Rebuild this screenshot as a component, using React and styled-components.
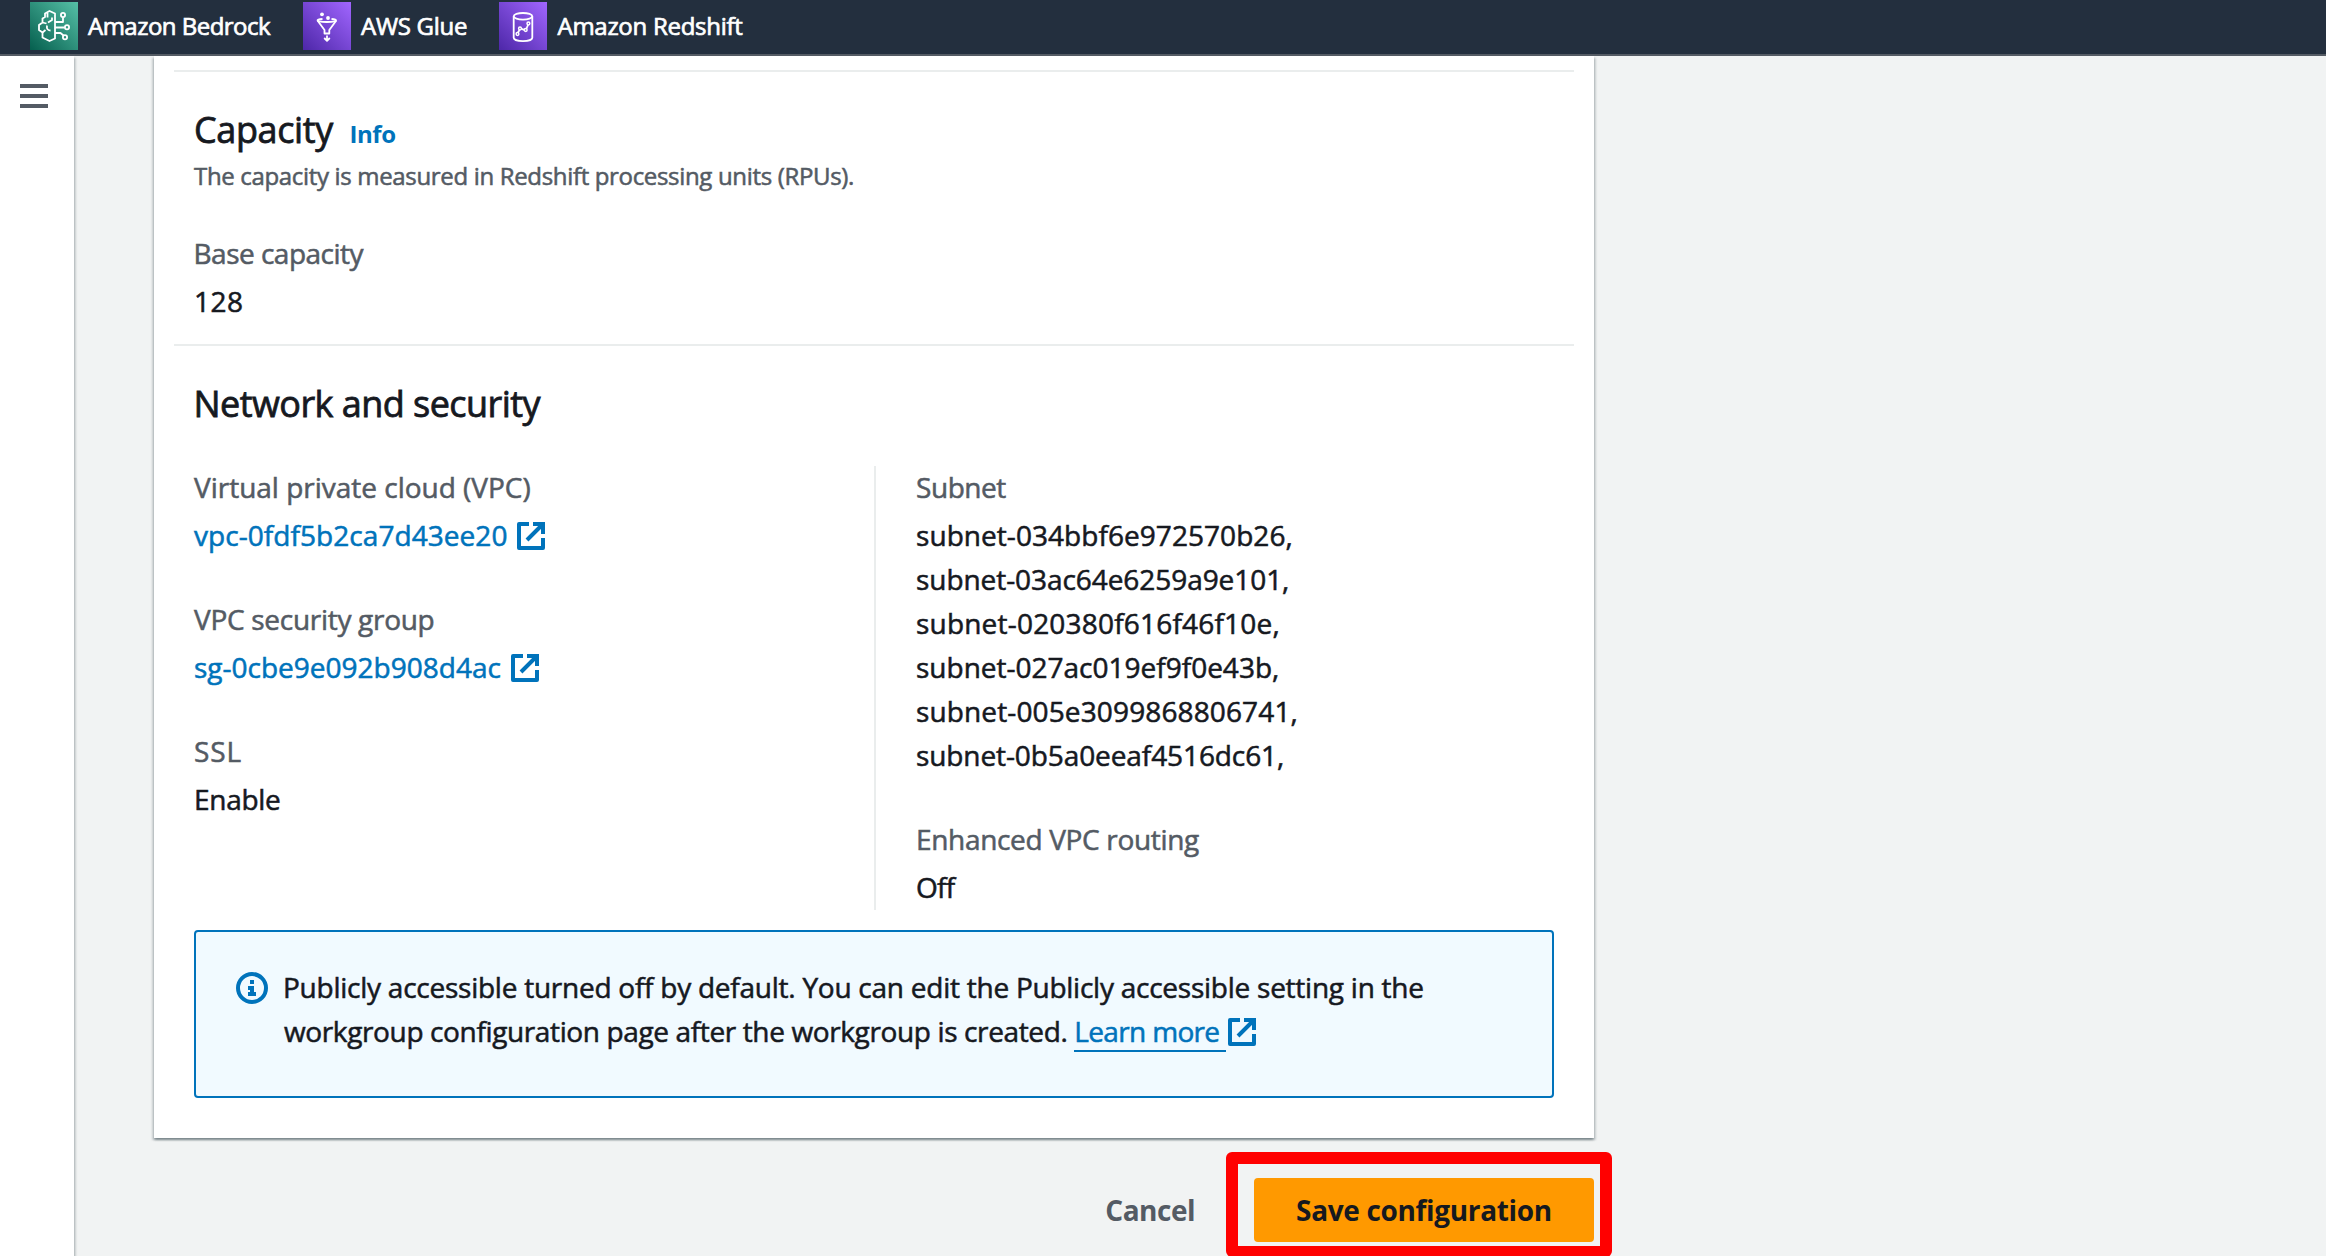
import React from "react";
import styled, { createGlobalStyle, css } from "styled-components";

const color = {
  ink: "#16191f",
  muted: "#545b64",
  link: "#0073bb",
  line: "#eaeded",
  page: "#f1f3f3",
};

const GlobalStyle = createGlobalStyle`
  *, *::before, *::after { box-sizing: border-box; }
  body {
    margin: 0;
    overflow: hidden;
    background: ${color.page};
    color: ${color.ink};
    font: 400 28px/44px "Open Sans", "Noto Sans", sans-serif;
    -webkit-text-stroke: 0.55px currentColor;
  }
  h2, p, dl, dt, dd { margin: 0; font-weight: 400; }
`;

/* Tracking and optical side-bearing correction for a run of text. */
const fitted = css`
  letter-spacing: ${(p) => p.$ls ?? 0}px;
  margin-left: ${(p) => p.$dx ?? 0}px;
`;

const Page = styled.div`
  display: flex;
  flex-direction: column;
  height: 1256px;
  overflow: hidden;
`;

const TopBar = styled.header`
  flex: none;
  position: relative;
  z-index: 2;
  display: flex;
  align-items: flex-start;
  height: 56px;
  padding: 2px 30px 0;
  background: #232f3e;
  border-bottom: 2px solid #545b64;
`;

const Service = styled.a`
  display: flex;
  gap: 10px;
  width: ${(p) => p.$width}px;
  color: #fff;
  font-size: 24px;
  line-height: 48px;
  white-space: nowrap;
  -webkit-text-stroke-width: 0.7px;
`;

const ServiceName = styled.span`
  ${fitted}
`;

const ServiceIcon = styled.svg`
  flex: none;
  width: 48px;
  height: 48px;
  fill: none;
  stroke: #fff;
  stroke-width: 1.8;
  stroke-linejoin: round;
  background: linear-gradient(45deg, ${(p) => p.$from}, ${(p) => p.$to});
`;

const Body = styled.div`
  flex: 1;
  display: flex;
  min-height: 0;
`;

const SideRail = styled.nav`
  flex: none;
  width: 74px;
  padding: 28px 0 0 20px;
  background: #fff;
  box-shadow: 0 2px 2px rgba(0, 28, 36, 0.3), 2px 2px 2px rgba(0, 28, 36, 0.15);
`;

const MenuButton = styled.div`
  display: flex;
  flex-direction: column;
  gap: 6px;
  width: 28px;
`;

const MenuBar = styled.span`
  height: 4px;
  background: ${color.muted};
`;

const Content = styled.main`
  width: 1440px;
  margin-left: 80px;
`;

const Card = styled.section`
  height: 1082px;
  padding: 14px 20px 40px;
  background: #fff;
  box-shadow: 0 2px 2px rgba(0, 28, 36, 0.3), 2px 2px 2px rgba(0, 28, 36, 0.15),
    -2px 2px 2px rgba(0, 28, 36, 0.15);
`;

const Section = styled.div`
  border-top: 2px solid ${color.line};
  padding: 36px 20px ${(p) => p.$bottom ?? 0}px;
`;

const Header = styled.div`
  display: flex;
  align-items: baseline;
  gap: 17px;
`;

const Title = styled.h2`
  ${fitted}
  font-size: 36px;
  line-height: 44px;
  -webkit-text-stroke-width: 0.8px;
`;

const InfoLink = styled.a`
  ${fitted}
  color: ${color.link};
  font-size: 24px;
  font-weight: 700;
  line-height: 36px;
  -webkit-text-stroke-width: 0;
`;

const Description = styled.p`
  ${fitted}
  margin-top: 6px;
  color: ${color.muted};
  font-size: 24px;
  line-height: 36px;
`;

const Fields = styled.dl`
  display: flex;
  flex-direction: column;
  gap: 40px;
  margin-top: ${(p) => p.$top ?? -1}px;
`;

const Field = styled.div`
  display: flex;
  flex-direction: column;
  gap: 4px;
`;

const Label = styled.dt`
  ${fitted}
  color: ${color.muted};
`;

const Value = styled.dd`
  ${fitted}
  && { margin-left: ${(p) => p.$dx ?? 0}px; }
  display: flex;
  align-items: center;
  gap: 10px;
`;

const Line = styled.span`
  ${fitted}
  display: block;
`;

const Link = styled.a`
  ${fitted}
  color: ${color.link};
`;

const Columns = styled.div`
  display: grid;
  grid-template-columns: 680px 680px;
  height: 444px;
  margin-top: 40px;
`;

const Column = styled.div`
  ${(p) => p.$divided && css`
    border-left: 2px solid ${color.line};
    padding-left: 40px;
  `}
`;

const Alert = styled.div`
  display: flex;
  gap: 14px;
  height: 168px;
  margin-top: 20px;
  padding: 33px 40px;
  background: #f1faff;
  border: 2px solid ${color.link};
  border-radius: 4px;
`;

const AlertIcon = styled.svg`
  flex: none;
  width: 32px;
  height: 32px;
  margin-top: 7px;
`;

const AlertText = styled.p`
  white-space: nowrap;
`;

const LearnMore = styled.a`
  ${fitted}
  padding-right: 7px;
  color: ${color.link};
  border-bottom: 2px solid ${color.link};
`;

const ExternalSvg = styled.svg`
  flex: none;
  width: 28px;
  height: 28px;
  fill: none;
  stroke: ${color.link};
  stroke-width: 4;
  ${(p) => p.$inline
    ? css`
        vertical-align: -4px;
        margin-left: 2px;
      `
    : css`
        margin-top: 2px;
      `}
`;

const Actions = styled.footer`
  display: flex;
  justify-content: flex-end;
  align-items: center;
  gap: 59px;
  margin-top: 40px;
  font-weight: 700;
  -webkit-text-stroke-width: 0;
`;

const Cancel = styled.a`
  ${fitted}
  color: ${color.muted};
`;

const SaveWrap = styled.div`
  position: relative;
`;

const SaveButton = styled.button`
  display: block;
  width: 340px;
  height: 64px;
  padding: 0;
  border: 0;
  border-radius: 4px;
  background: #ff9900;
  color: ${color.ink};
  font: inherit;
  letter-spacing: ${(p) => p.$ls}px;
`;

const Highlight = styled.div`
  position: absolute;
  inset: -26px -18px -15px -28px;
  border: 12px solid #ff0000;
  border-bottom-width: 11px;
  border-radius: 6px;
`;

function BedrockIcon() {
  return (
    <ServiceIcon viewBox="0 0 48 48" $from="#055f4e" $to="#56c0a7">
      <path d="M25 11.5 19.5 9 15 11.5V15l-2.500 1.500V20.500L9 23v5l3.500 2.500V35.500l7 3.500 5.500-2.500Z" />
      <path d="M17.500 11v4.500M22 15.500v2.500l-4 2.500M12.500 20.500l4 1M20.500 28.500c-3 0-4-2-3.500-5M12.500 30.500l3-2.500" />
      <path d="M25 20h8v-4.500M25 25.500h9.500M25 31h5.500l3 2.500" />
      <circle cx="33" cy="13" r="2.100" />
      <circle cx="37" cy="25.300" r="2.100" />
      <circle cx="35" cy="35.300" r="2.100" />
    </ServiceIcon>
  );
}

function GlueIcon() {
  return (
    <ServiceIcon viewBox="0 0 48 48" $from="#4d27a8" $to="#a166ff">
      <circle cx="19" cy="12.300" r="1.900" fill="#fff" stroke="none" />
      <circle cx="25" cy="16" r="1.900" fill="#fff" stroke="none" />
      <path d="M19.500 17c-3 .2-5 .6-5 1.300 0 1 4 1.700 9.300 1.700s9.300-.7 9.300-1.700c0-.7-1.700-1.100-4.600-1.300" />
      <path d="m14.500 18.500 7 9.500v3.500h4.800V28l7-9.500M24 33.500v5M21.200 36l2.800 2.800 2.800-2.800" />
    </ServiceIcon>
  );
}

function RedshiftIcon() {
  return (
    <ServiceIcon viewBox="0 0 48 48" $from="#4d27a8" $to="#a166ff">
      <ellipse cx="24" cy="14.300" rx="9.300" ry="3.300" />
      <path d="M14.700 14.300v21.500c0 2 4.200 3.300 9.300 3.300s9.300-1.300 9.300-3.300V14.300" />
      <path d="m19 30.500 1.500-2.500M22.500 26.800l2.800 1M27.500 26.500l1.500-3.500" />
      <g strokeWidth="1.500">
        <circle cx="18.500" cy="32" r="1.400" />
        <circle cx="21" cy="26.500" r="1.400" />
        <circle cx="26.700" cy="28" r="1.400" />
        <circle cx="29.400" cy="21.500" r="1.400" />
      </g>
    </ServiceIcon>
  );
}

function ExternalIcon({ inline }) {
  return (
    <ExternalSvg viewBox="0 0 28 28" $inline={inline}>
      <path strokeLinejoin="round" d="M12 2H2v24h24V16" />
      <path d="M16 2h10v10M25.500 2.500 10 18" />
    </ExternalSvg>
  );
}

const services = [
  { name: "Amazon Bedrock", Icon: BedrockIcon, width: 273, ls: -0.52, dx: 0 },
  { name: "AWS Glue", Icon: GlueIcon, width: 196, ls: -0.28, dx: 0 },
  { name: "Amazon Redshift", Icon: RedshiftIcon, width: 260, ls: -0.28, dx: 0.5 },
];

const subnets = [
  ["subnet-034bbf6e972570b26,", 0.055],
  ["subnet-03ac64e6259a9e101,", -0.064],
  ["subnet-020380f616f46f10e,", 0.2],
  ["subnet-027ac019ef9f0e43b,", 0],
  ["subnet-005e3099868806741,", 0.13],
  ["subnet-0b5a0eeaf4516dc61,", -0.095],
];

export default function App() {
  return (
    <Page>
      <GlobalStyle />
      <TopBar>
        {services.map(({ name, Icon, width, ls, dx }) => (
          <Service key={name} $width={width}>
            <Icon />
            <ServiceName $ls={ls} $dx={dx}>{name}</ServiceName>
          </Service>
        ))}
      </TopBar>
      <Body>
        <SideRail>
          <MenuButton>
            <MenuBar />
            <MenuBar />
            <MenuBar />
          </MenuButton>
        </SideRail>
        <Content>
          <Card>
            <Section $bottom={21}>
              <Header>
                <Title $ls={-0.38}>Capacity</Title>
                <InfoLink $ls={-0.4} $dx={-0.5}>Info</InfoLink>
              </Header>
              <Description $ls={-0.332}>
                The capacity is measured in Redshift processing units (RPUs).
              </Description>
              <Fields $top={37}>
                <Field>
                  <Label $ls={-0.51} $dx={-0.5}>Base capacity</Label>
                  <Value $ls={0.49}>128</Value>
                </Field>
              </Fields>
            </Section>
            <Section>
              <Title $ls={-0.55} $dx={-0.5}>Network and security</Title>
              <Columns>
                <Column>
                  <Fields>
                    <Field>
                      <Label $ls={-0.01}>Virtual private cloud (VPC)</Label>
                      <Value>
                        <Link $ls={0.057}>vpc-0fdf5b2ca7d43ee20</Link>
                        <ExternalIcon />
                      </Value>
                    </Field>
                    <Field>
                      <Label $ls={-0.29}>VPC security group</Label>
                      <Value>
                        <Link>sg-0cbe9e092b908d4ac</Link>
                        <ExternalIcon />
                      </Value>
                    </Field>
                    <Field>
                      <Label $ls={0.9}>SSL</Label>
                      <Value $ls={-0.3}>Enable</Value>
                    </Field>
                  </Fields>
                </Column>
                <Column $divided>
                  <Fields>
                    <Field>
                      <Label $ls={-0.45}>Subnet</Label>
                      <dd>
                        {subnets.map(([id, ls]) => (
                          <Line key={id} $ls={ls}>{id}</Line>
                        ))}
                      </dd>
                    </Field>
                    <Field>
                      <Label $ls={-0.332}>Enhanced VPC routing</Label>
                      <Value $ls={-0.7}>Off</Value>
                    </Field>
                  </Fields>
                </Column>
              </Columns>
              <Alert>
                <AlertIcon viewBox="0 0 32 32">
                  <circle cx="16" cy="16" r="14" fill="none" stroke={color.link} strokeWidth="4" />
                  <path fill={color.link} d="M14 8h4v4h-4zM12 14h6v6h2v4h-8v-4h2v-2h-2z" />
                </AlertIcon>
                <AlertText>
                  <Line $ls={-0.248} $dx={1}>
                    Publicly accessible turned off by default. You can edit the Publicly accessible setting in the
                  </Line>
                  <Line $ls={-0.37} $dx={2}>
                    workgroup configuration page after the workgroup is created.{" "}
                    <LearnMore $ls={-0.66}>Learn more</LearnMore>
                    <ExternalIcon inline />
                  </Line>
                </AlertText>
              </Alert>
            </Section>
          </Card>
          <Actions>
            <Cancel $ls={-0.5}>Cancel</Cancel>
            <SaveWrap>
              <SaveButton $ls={-0.34}>Save configuration</SaveButton>
              <Highlight />
            </SaveWrap>
          </Actions>
        </Content>
      </Body>
    </Page>
  );
}
